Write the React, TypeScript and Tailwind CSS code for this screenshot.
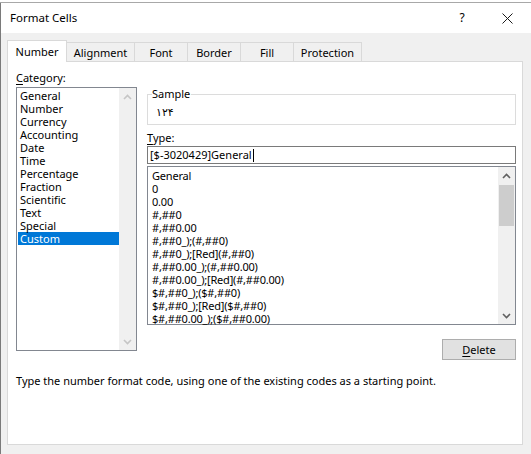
import React from "react";

// ── Data ──────────────────────────────────────────────────────────────────────

const CATEGORIES = [
  "General",
  "Number",
  "Currency",
  "Accounting",
  "Date",
  "Time",
  "Percentage",
  "Fraction",
  "Scientific",
  "Text",
  "Special",
  "Custom",
];

const FORMATS = [
  "General",
  "0",
  "0.00",
  "#,##0",
  "#,##0.00",
  "#,##0_);(#,##0)",
  "#,##0_);[Red](#,##0)",
  "#,##0.00_);(#,##0.00)",
  "#,##0.00_);[Red](#,##0.00)",
  "$#,##0_);($#,##0)",
  "$#,##0_);[Red]($#,##0)",
  "$#,##0.00_);($#,##0.00)",
];

const TABS = [
  { label: "Number", cls: "w-[60px] h-[22px] -mb-px bg-white border-l border-t border-r border-[#d9d9d9] z-10" },
  { label: "Alignment", cls: "w-[68px] h-[19px] border-t border-r border-[#d9d9d9]" },
  { label: "Font", cls: "w-[53px] h-[19px] border-t border-r border-[#d9d9d9]" },
  { label: "Border", cls: "w-[53px] h-[19px] border-t border-r border-[#d9d9d9]" },
  { label: "Fill", cls: "w-[53px] h-[19px] border-t border-r border-[#d9d9d9]" },
  { label: "Protection", cls: "w-[68px] h-[19px] border-t border-r border-[#d9d9d9]" },
];

// ── Bits ──────────────────────────────────────────────────────────────────────

function Chevron({ dir, color }: { dir: "up" | "down"; color: string }) {
  return (
    <svg width="9" height="6" viewBox="0 0 9 6">
      <path
        d={dir === "up" ? "M1 5 L4.5 1.5 L8 5" : "M1 1 L4.5 4.5 L8 1"}
        fill="none"
        stroke={color}
        strokeWidth="1.6"
      />
    </svg>
  );
}

function ScrollBar({ disabled }: { disabled?: boolean }) {
  const c = disabled ? "#c5c5c5" : "#606060";
  return (
    <div className="w-[17px] bg-[#f0f0f0] flex flex-col shrink-0">
      <div className="h-[17px] flex items-center justify-center">
        <Chevron dir="up" color={c} />
      </div>
      <div className="flex-1">
        {!disabled && <div className="mx-px mt-px h-[41px] bg-[#cdcdcd]" />}
      </div>
      <div className="h-[17px] flex items-center justify-center">
        <Chevron dir="down" color={c} />
      </div>
    </div>
  );
}

// ── Main ──────────────────────────────────────────────────────────────────────

export default function App() {
  return (
    <div className="w-[531px] h-[454px] overflow-hidden bg-[#f0f0f0] text-[11px] text-black font-['Noto_Sans',sans-serif]">
      {/* strip of the sheet behind */}
      <div className="h-[3px] bg-white border-b border-[#a8a8a8]" />

      <div className="border-l border-[#7a7a7a] h-[451px]">
        {/* Title bar */}
        <div className="h-[30px] bg-white flex items-center pl-[9px] text-[12px]">
          <span className="flex-1 text-[11.5px]">Format Cells</span>
          <span className="w-[12px] text-center mr-[34px]">?</span>
          <svg width="11" height="11" viewBox="0 0 11 11" className="mr-[18px]">
            <path d="M0.5 0.5 L10.5 10.5 M10.5 0.5 L0.5 10.5" stroke="#1a1a1a" strokeWidth="1" />
          </svg>
        </div>

        <div className="pl-[6px] pt-[7px]">
          {/* Tabs */}
          <div className="flex items-end">
            {TABS.map((t) => (
              <div key={t.label} className={`relative flex items-center justify-center pt-[2px] ${t.cls}`}>
                {t.label}
              </div>
            ))}
          </div>

          {/* Panel */}
          <div className="w-[516px] h-[384px] bg-white border border-[#d9d9d9] pl-[8px]">
            <div className="flex gap-[10px]">
              {/* Category */}
              <div className="w-[121px] pt-[8px]">
                <div className="h-[16px] leading-[16px]">
                  <u className="underline-offset-2">C</u>ategory:
                </div>
                <div className="mt-px h-[264px] border border-[#828790] flex">
                  <div className="flex-1 pl-px pt-[1px]">
                    {CATEGORIES.map((c) => (
                      <div
                        key={c}
                        className={
                          c === "Custom"
                            ? "h-[13px] leading-[13px] pl-[2px] bg-[#0078d7] text-white"
                            : "h-[13px] leading-[13px] pl-[2px]"
                        }
                      >
                        {c}
                      </div>
                    ))}
                  </div>
                  <ScrollBar disabled />
                </div>
              </div>

              {/* Right column */}
              <div className="w-[369px] pt-[32px]">
                <div className="relative h-[31px] border border-[#dcdcdc]">
                  <span className="absolute left-[4px] top-[-9px] bg-white pr-px leading-[16px]">Sample</span>
                  <div className="pt-[10px] pl-[8px] leading-[16px] font-['DejaVu_Sans',sans-serif] text-[11px]">۱۲۴</div>
                </div>

                <div className="mt-[5px] h-[16px] leading-[16px]">
                  <u className="underline-offset-2">T</u>ype:
                </div>
                <div className="h-[18px] border border-[#7a7a7a] flex items-center pl-[2px] leading-[16px]">
                  [$-3020429]General
                  <span className="inline-block w-px h-[13px] bg-black ml-px" />
                </div>

                <div className="mt-[2px] h-[159px] border border-[#828790] flex">
                  <div className="flex-1 pl-[4px] pt-[2px] tracking-[-0.2px]">
                    {FORMATS.map((f) => (
                      <div key={f} className="h-[13px] leading-[13px] whitespace-nowrap">
                        {f}
                      </div>
                    ))}
                  </div>
                  <ScrollBar />
                </div>

                <div className="flex justify-end mt-[14px]">
                  <button className="w-[74px] h-[21px] bg-[#e1e1e1] border border-[#adadad] leading-[19px]">
                    <u className="underline-offset-2">D</u>elete
                  </button>
                </div>
              </div>
            </div>

            <div className="mt-[13px] h-[16px] leading-[16px]">
              Type the number format code, using one of the existing codes as a starting point.
            </div>
          </div>
        </div>
      </div>
    </div>
  );
}
